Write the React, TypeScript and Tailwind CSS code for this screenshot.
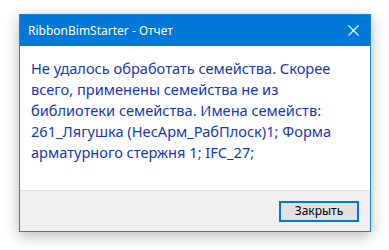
import React from "react";

export default function App() {
  return (
    <div className="w-[389px] h-[250px] bg-white relative overflow-hidden" style={{ fontFamily: '"Noto Sans", "Open Sans", sans-serif' }}>
      <div className="absolute left-[19px] top-[14px] w-[352px] h-[218px] border border-[#1883d7] bg-white flex flex-col shadow-[0_4px_14px_rgba(0,0,0,0.28)]">
        <div className="h-[31px] bg-[#0078d7] flex items-center justify-between pl-[8px] pr-[10px] shrink-0">
          <span className="text-white text-[12px] leading-none">RibbonBimStarter - Отчет</span>
          <svg width="11" height="11" viewBox="0 0 11 11" className="mr-[1px]">
            <path d="M0.5 0.5 L10.5 10.5 M10.5 0.5 L0.5 10.5" stroke="white" strokeWidth="1.1" />
          </svg>
        </div>
        <div className="flex-1 px-[11px] pt-[12px] text-[14.6px] leading-[21px] text-[#1638b4]">
          Не удалось обработать семейства. Скорее<br />
          всего, применены семейства не из<br />
          библиотеки семейства. Имена семейств:<br />
          261_Лягушка (НесАрм_РабПлоск)1; Форма<br />
          арматурного стержня 1; IFC_27;
        </div>
        <div className="h-[41px] bg-[#f0f0f0] border-t border-[#dfdfdf] flex items-center justify-end pr-[11px] shrink-0">
          <button className="w-[80px] h-[21px] border-2 border-[#0078d7] bg-[#e1e1e1] text-[12px] text-black leading-none flex items-center justify-center">
            Закрыть
          </button>
        </div>
      </div>
    </div>
  );
}
